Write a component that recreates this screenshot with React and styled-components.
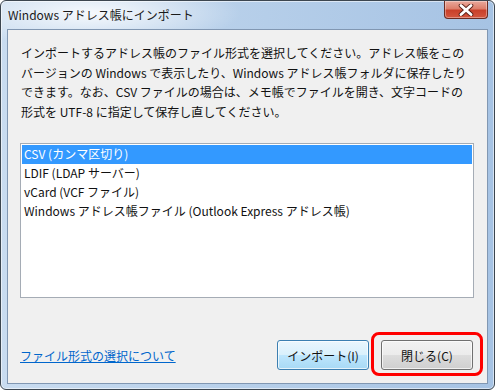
import React from "react";
import styled, { createGlobalStyle } from "styled-components";

const Global = createGlobalStyle`
  html, body { margin: 0; padding: 0; background: #ffffff; }
  body { font-family: "Noto Sans CJK JP", "Noto Sans", sans-serif; }
  * { box-sizing: border-box; }
`;

const Window = styled.div`
  width: 495px;
  height: 390px;
  border: 1px solid #3c4650;
  border-radius: 6px;
  background:
    radial-gradient(ellipse 150px 34px at 90px 12px, rgba(255,255,255,0.85), rgba(255,255,255,0) 100%),
    linear-gradient(to right, #c9dcf0 0%, #b8d0ea 45%, #a6c3e4 100%);
  box-shadow: inset 0 0 0 1px rgba(255,255,255,0.55);
  display: flex;
  flex-direction: column;
  overflow: hidden;
`;

const TitleBar = styled.div`
  height: 28px;
  flex: none;
  display: flex;
  align-items: flex-start;
  justify-content: space-between;
  padding: 0 6px 0 7px;
`;

const Title = styled.div`
  font-size: 12px;
  line-height: 12px;
  margin-top: 8px;
  color: #1a1a1a;
  white-space: nowrap;
`;

const CloseButton = styled.div`
  width: 44px;
  height: 18px;
  border: 1px solid #6b2b22;
  border-top: none;
  border-radius: 0 0 4px 4px;
  background: linear-gradient(to bottom, #e9a99c 0%, #dd7f6b 45%, #c9402a 55%, #d4563f 100%);
  box-shadow: inset 0 0 0 1px rgba(255,255,255,0.35);
  display: flex;
  align-items: center;
  justify-content: center;
`;

const Client = styled.div`
  flex: 1;
  margin: 0 6px 5px 6px;
  border: 1px solid #8197b2;
  background: #f0f0f0;
  display: flex;
  flex-direction: column;
  padding: 13px 13px 13px 12px;
`;

const Description = styled.p`
  margin: 0 0 0 1px;
  font-size: 12px;
  line-height: 19.5px;
  color: #111;
  white-space: nowrap;
`;

const ListBox = styled.div`
  margin-top: 22px;
  height: 155px;
  border: 1px solid #a5acb5;
  background: #ffffff;
  padding: 1px;
  display: flex;
  flex-direction: column;
`;

const ListItem = styled.div`
  height: 19px;
  line-height: 18px;
  font-size: 12px;
  padding-left: 2px;
  white-space: nowrap;
  color: ${(p) => (p.$selected ? "#ffffff" : "#111")};
  background: ${(p) => (p.$selected ? "#3399ff" : "transparent")};
`;

const Footer = styled.div`
  margin-top: auto;
  display: flex;
  align-items: center;
  padding-right: 1px;
`;

const Link = styled.a`
  font-size: 12px;
  color: #0066cc;
  text-decoration: underline;
  cursor: pointer;
  margin-right: auto;
`;

const Button = styled.button`
  width: 92px;
  height: 30px;
  font-family: inherit;
  font-size: 12px;
  color: #111;
  border-radius: 3px;
  border: 1px solid ${(p) => (p.$default ? "#3c7fb1" : "#707070")};
  background: ${(p) =>
    p.$default
      ? "linear-gradient(to bottom, #eaf6fd 0%, #d9f0fc 50%, #bee6fd 51%, #a7d9f5 100%)"
      : "linear-gradient(to bottom, #f2f2f2 0%, #ebebeb 50%, #dddddd 51%, #cfcfcf 100%)"};
  box-shadow: inset 0 0 0 1px rgba(255,255,255,0.7);
  padding: 0;
`;

const CloseWrap = styled.div`
  position: relative;
  margin-left: 12px;
  display: flex;
`;

const Callout = styled.div`
  position: absolute;
  left: -10px;
  right: -10px;
  top: -8px;
  bottom: -6px;
  border: 3px solid #ff0000;
  border-radius: 8px;
  pointer-events: none;
`;

export default function App() {
  return (
    <>
      <Global />
      <Window>
        <TitleBar>
          <Title>Windows アドレス帳にインポート</Title>
          <CloseButton>
            <svg width="16" height="12" viewBox="0 0 16 12">
              <path d="M3 1.5 L13 10.5 M13 1.5 L3 10.5" stroke="#5a2018" strokeWidth="4.6" strokeLinecap="round" />
              <path d="M3 1.5 L13 10.5 M13 1.5 L3 10.5" stroke="#ffffff" strokeWidth="2.8" strokeLinecap="round" />
            </svg>
          </CloseButton>
        </TitleBar>
        <Client>
          <Description>
            インポートするアドレス帳のファイル形式を選択してください。アドレス帳をこの
            <br />
            バージョンの Windows で表示したり、Windows アドレス帳フォルダに保存したり
            <br />
            できます。なお、CSV ファイルの場合は、メモ帳でファイルを開き、文字コードの
            <br />
            形式を UTF-8 に指定して保存し直してください。
          </Description>
          <ListBox>
            <ListItem $selected>CSV (カンマ区切り)</ListItem>
            <ListItem>LDIF (LDAP サーバー)</ListItem>
            <ListItem>vCard (VCF ファイル)</ListItem>
            <ListItem>Windows アドレス帳ファイル (Outlook Express アドレス帳)</ListItem>
          </ListBox>
          <Footer>
            <Link>ファイル形式の選択について</Link>
            <Button $default>インポート(I)</Button>
            <CloseWrap>
              <Button>閉じる(C)</Button>
              <Callout />
            </CloseWrap>
          </Footer>
        </Client>
      </Window>
    </>
  );
}
